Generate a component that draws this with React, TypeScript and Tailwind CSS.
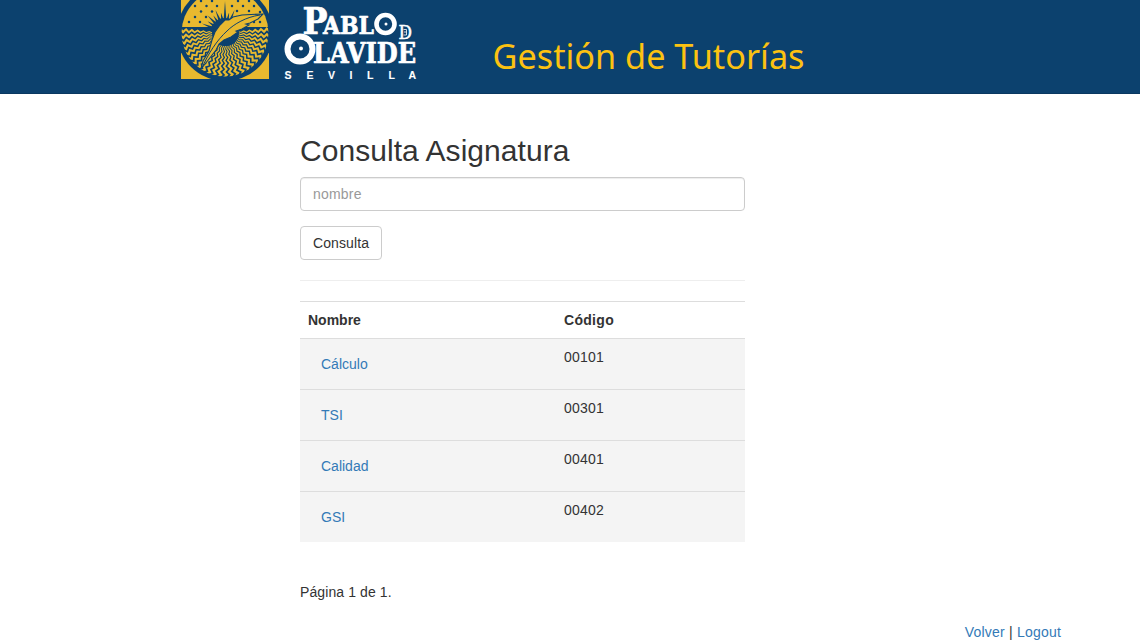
const C = { x: 44, y: 33 };

const polar = (r: number, deg: number) => {
  const a = (deg * Math.PI) / 180;
  return `${(C.x + r * Math.cos(a)).toFixed(2)} ${(C.y + r * Math.sin(a)).toFixed(2)}`;
};

// Tapered zigzag rays that fill the lower half of the emblem.
const RAY_STEP = 7.8;
const rays = Array.from({ length: 25 }, (_, i) => {
  const base = -4 + i * RAY_STEP;
  const radii = Array.from({ length: 12 }, (_, k) => 13 + k * 2.9);
  const zigzag = (k: number) => (k % 2 ? 2.1 : -2.1);
  const left = radii.map((r, k) => polar(r, base + zigzag(k) - RAY_STEP * 0.28));
  const right = radii.map((r, k) => polar(r, base + zigzag(k) + RAY_STEP * 0.28)).reverse();
  return `M${[...left, ...right].join("L")}Z`;
});

// Spikes of the rising sun.
const spikes = Array.from({ length: 17 }, (_, i) => {
  const a = 180 + i * 11.25;
  const tip = i === 8 ? 32 : i % 2 === 0 ? 25 : 21;
  return `M${polar(12, a - 7)}L${polar(tip, a)}L${polar(12, a + 7)}Z`;
});

const dots: [number, number][] = [
  [20, 1], [31, 1], [57, 1], [68, 1],
  [14, 6], [25.5, 6], [36, 6], [51, 6], [62, 6], [73, 6],
  [20, 11.5], [31, 11.5], [56, 11], [68, 11],
  [14, 17], [25, 17], [8, 22], [19, 22], [73, 22], [79, 22], [79, 12],
];

function Emblem() {
  return (
    <svg className="block h-[79px] w-[88px] shrink-0" viewBox="0 0 88 79">
      <defs>
        <clipPath id="disc"><circle cx="44" cy="33" r="43.5" /></clipPath>
        <clipPath id="sky"><rect x="0" y="-12" width="88" height="39" /></clipPath>
      </defs>
      <rect width="88" height="79" fill="#e8b92f" />
      <circle cx="44" cy="33" r="48" fill="#0c416e" />
      <g clipPath="url(#disc)">
        <g clipPath="url(#sky)">
          <rect y="-12" width="88" height="39" fill="#e8b92f" />
          {dots.map(([x, y]) => <circle key={`${x}-${y}`} cx={x} cy={y} r="1.25" fill="#0c416e" />)}
          {spikes.map((d) => <path key={d} d={d} fill="#0c416e" />)}
          <circle cx="44" cy="33" r="15" fill="#0c416e" />
        </g>
        {rays.map((d) => <path key={d} d={d} fill="#e8b92f" />)}
        <circle cx="45" cy="33" r="13" fill="#0c416e" />
      </g>
      <path d="M20 69L22 61L28 51L31 40L34 32L39 25L44 20L48 20L52 17L61 15L70 14.500L82 14L77 19L69 23L65 24L68 25L61 29L55 31L57 32L50 37L43 40L38 44L35 50L28 59Z" fill="#e8b92f" stroke="#0c416e" strokeWidth="1.100" />
      <path d="M20.500 69C27 54 36 40 46 31C53 24 65 17 79 15" fill="none" stroke="#0c416e" strokeWidth="1" />
    </svg>
  );
}

function Wordmark() {
  return (
    <svg className="ml-[13px] block h-[84px] w-[140px] shrink-0 overflow-visible" viewBox="282 0 140 84" fill="#fff" stroke="#fff" fontFamily="'DejaVu Serif', serif" fontWeight="700">
      <g strokeWidth="0.7" strokeLinejoin="round">
        <text x="302.500" y="33.500" fontSize="37" textLength="25" lengthAdjust="spacingAndGlyphs">P</text>
        <text x="323" y="33.500" fontSize="24.500" textLength="51" lengthAdjust="spacingAndGlyphs">ABL</text>
        <text x="313" y="62.500" fontSize="27" textLength="103" lengthAdjust="spacingAndGlyphs">LAVIDE</text>
      </g>
      <text x="398.500" y="38.500" fontSize="18" textLength="13.500" lengthAdjust="spacingAndGlyphs" fontWeight="400" strokeWidth="0.5">D</text>
      <path d="M403.500 29.500H406.500V35H403.500M404 32H406.500" fill="none" strokeWidth="0.8" />
      <circle cx="385.500" cy="24" r="9" fill="none" strokeWidth="4.600" />
      <circle cx="386" cy="24" r="1.500" stroke="none" />
      <circle cx="300" cy="49" r="12.500" fill="none" strokeWidth="6" />
      <circle cx="301" cy="48.500" r="2" stroke="none" />
      <text x="284.500 306.500 328 349.500 367 388.500 408.500" y="78.700" fontSize="10.500" fontFamily="'Liberation Sans', sans-serif" strokeWidth="0.1">SEVILLA</text>
    </svg>
  );
}

const subjects = [
  ["Cálculo", "00101"],
  ["TSI", "00301"],
  ["Calidad", "00401"],
  ["GSI", "00402"],
];

export default function App() {
  return (
    <div className="h-[641px] overflow-hidden bg-white font-['Liberation_Sans',sans-serif] text-sm leading-5 text-[#333]">
      <header className="flex h-[94px] items-start border-b border-[#0a3860] bg-[#0c416e] pl-[181px]">
        <Emblem />
        <Wordmark />
        <svg className="mt-[30px] ml-[66px] block h-[60px] w-[326px]" viewBox="0 0 326 60">
          <text x="4.500" y="39" fontSize="34.500" fill="#fcc211" fontFamily="'Noto Sans', sans-serif" textLength="312" lengthAdjust="spacingAndGlyphs">Gestión de Tutorías</text>
        </svg>
      </header>
      <main className="ml-[300px] w-[445px] pt-10">
        <h2 className="mb-[10px] text-[30px] leading-[33px] tracking-[0.05px]">Consulta Asignatura</h2>
        <input placeholder="nombre" className="block h-[34px] w-full rounded border border-[#ccc] px-3 py-1.5 tracking-[0.2px] shadow-[inset_0_1px_1px_rgba(0,0,0,0.075)] placeholder:text-[#999]" />
        <button className="mt-[15px] block h-[34px] w-[82px] rounded border border-[#ccc] tracking-[0.1px]">Consulta</button>
        <hr className="my-5 border-[#eee]" />
        <table className="w-full table-fixed border-collapse">
          <thead>
            <tr className="h-[37px] border-t border-[#ddd] text-left">
              <th className="w-[256px] px-2 py-0">Nombre</th>
              <th className="px-2 py-0 tracking-[0.3px]">Código</th>
            </tr>
          </thead>
          <tbody>
            {subjects.map(([name, code]) => (
              <tr key={code} className="h-[51px] border-t border-[#ddd] bg-[#f4f4f4] last:h-[50px]">
                <td className="px-[21px] py-0 align-middle text-[#337ab7]"><a href="#">{name}</a></td>
                <td className="px-2 pt-2 align-top tracking-[0.2px]">{code}</td>
              </tr>
            ))}
          </tbody>
        </table>
        <p className="mt-10 tracking-[0.1px]">Página 1 de 1.</p>
      </main>
      <footer className="mt-5 pr-[79px] text-right tracking-[0.200px]">
        <a href="#" className="text-[#337ab7]">Volver</a> | <a href="#" className="text-[#337ab7]">Logout</a>
      </footer>
    </div>
  );
}
